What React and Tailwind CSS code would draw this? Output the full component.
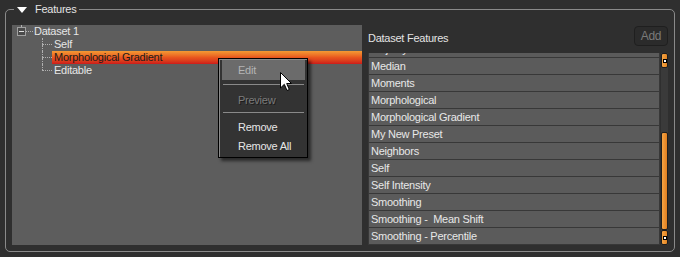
import React from "react";

const items = [
  "Majority",
  "Median",
  "Moments",
  "Morphological",
  "Morphological Gradient",
  "My New Preset",
  "Neighbors",
  "Self",
  "Self Intensity",
  "Smoothing",
  "Smoothing -  Mean Shift",
  "Smoothing - Percentile",
];

function ChildRow({ label, selected, last }) {
  return (
    <div className="flex h-[13px] items-stretch">
      <div className="w-[30px] shrink-0" />
      <div className="flex w-[10px] shrink-0 flex-col">
        <div className="h-[6px] border-l border-dotted border-[#b0b0b0]" />
        <div className="h-[1px] border-t border-dotted border-[#b0b0b0]" />
        <div className={"flex-1 " + (last ? "" : "border-l border-dotted border-[#b0b0b0]")} />
      </div>
      <div
        className={
          "flex flex-1 items-center pl-[2px] " +
          (selected
            ? "bg-gradient-to-b from-[#f39a34] via-[#e8561e] to-[#cc1a1a] text-[#1a1a1a]"
            : "text-[#e6e6e6]")
        }
      >
        {label}
      </div>
    </div>
  );
}

function ScrollCap() {
  return (
    <div className="flex h-[15px] items-center justify-center rounded-[2px] border border-[#1e1e1e] bg-gradient-to-r from-[#f6a443] to-[#e28523]">
      <div className="flex h-[4px] w-[4px] items-center justify-center bg-black">
        <div className="h-[2px] w-[2px] bg-white" />
      </div>
    </div>
  );
}

export default function App() {
  return (
    <div
      className="relative h-[257px] w-[680px] overflow-hidden bg-[#2f2f2f] px-[5px] pb-[5px] pt-[9px] text-[11px] tracking-[-0.25px]"
      style={{ fontFamily: '"Liberation Sans", Arial, sans-serif' }}
    >
      {/* group box */}
      <div className="relative flex h-[243px] gap-[6px] rounded-[5px] border border-[#8a8a8a] px-[6px] pb-[6px] pt-[15px]">
        {/* legend */}
        <div className="absolute left-[8px] top-[-8px] flex h-[15px] items-center gap-[8px] bg-[#2f2f2f] pl-[3px] pr-[3px]">
          <div className="h-0 w-0 border-x-[5px] border-t-[6px] border-x-transparent border-t-white" />
          <span className="text-[11px] text-[#e4e4e4]">Features</span>
        </div>

        {/* left tree panel */}
        <div className="w-[350px] shrink-0 bg-[#5d5d5d]">
          <div className="flex h-[13px] items-stretch">
            <div className="w-[5px] shrink-0" />
            <div className="flex w-[9px] shrink-0 flex-col items-center">
              <div className="h-[2px] border-l border-dotted border-[#b0b0b0]" />
              <div className="flex h-[9px] w-[9px] items-center justify-center border border-[#a0a0a0] bg-[#4a4a4a]">
                <div className="h-[1px] w-[5px] bg-[#e0e0e0]" />
              </div>
            </div>
            <div className="flex w-[7px] shrink-0 items-center">
              <div className="h-[1px] w-full border-t border-dotted border-[#b0b0b0]" />
            </div>
            <div className="flex items-center pl-[1px] text-[#e6e6e6]">Dataset 1</div>
          </div>
          <ChildRow label="Self" />
          <ChildRow label="Morphological Gradient" selected />
          <ChildRow label="Editable" last />
        </div>

        {/* right column */}
        <div className="flex w-[300px] shrink-0 flex-col">
          <div className="flex h-[28px] items-start justify-between">
            <span className="mt-[5px] text-[#e4e4e4]">Dataset Features</span>
            <div className="mt-[1px] flex h-[20px] w-[34px] items-center justify-center rounded-[4px] border border-[#1f1f1f] bg-[#2b2b2b] text-[12px] text-[#7a7a7a]">
              Add
            </div>
          </div>
          <div className="flex h-[192px] gap-[1px]">
            <div className="flex flex-1 flex-col gap-[1px] overflow-hidden bg-[#383838] px-[1px]">
              <div className="-mt-[12px] flex flex-col gap-[1px]">
                {items.map((it) => (
                  <div
                    key={it}
                    className="flex h-[16px] shrink-0 items-center whitespace-pre bg-[#5b5b5b] pl-[2px] text-[#e8e8e8]"
                  >
                    {it}
                  </div>
                ))}
              </div>
            </div>
            <div className="flex w-[7px] flex-col bg-[#3a3a3a]">
              <ScrollCap />
              <div className="h-[64px]" />
              <div className="flex-1 rounded-[2px] border border-[#1e1e1e] bg-gradient-to-r from-[#f6a443] to-[#e07f1f]" />
              <ScrollCap />
            </div>
          </div>
        </div>
      </div>

      {/* context menu */}
      <div className="absolute left-[218px] top-[58px] h-[100px] w-[90px] border border-black bg-[#333333] shadow-[3px_3px_3px_rgba(0,0,0,0.55)]">
        <div className="flex h-full flex-col border-l border-t border-[#8a8a8a] px-[2px]">
          <div className="flex h-[20px] items-center bg-[#6b6b6b] pl-[16px] text-[#b4b4b4]">Edit</div>
          <div className="mx-[1px] mt-[4px] h-[1px] bg-[#8a8a8a]" />
          <div
            className="mt-[5px] flex h-[20px] items-center pl-[16px] text-[#7c7c7c]"
            style={{ textShadow: "1px 1px 0 #1c1c1c" }}
          >
            Preview
          </div>
          <div className="mx-[1px] mt-[2px] h-[1px] bg-[#8a8a8a]" />
          <div className="mt-[4px] flex h-[20px] items-center pl-[16px] text-[#e6e6e6]">Remove</div>
          <div className="flex h-[19px] items-center pl-[16px] text-[#e6e6e6]">Remove All</div>
        </div>
      </div>

      {/* mouse cursor */}
      <svg className="absolute left-[280px] top-[72px]" width="13" height="20" viewBox="0 0 13 20">
        <path
          d="M0.5 0.5 L0.5 16 L4.3 12.3 L7 18.5 L9.3 17.5 L6.7 11.5 L11.5 11.5 Z"
          fill="white"
          stroke="black"
          strokeWidth="1"
          strokeLinejoin="round"
        />
      </svg>
    </div>
  );
}
